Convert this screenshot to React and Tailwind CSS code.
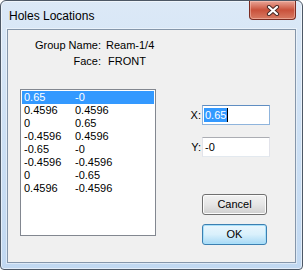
const ROWS = [
  ['0.65', '-0'],
  ['0.4596', '0.4596'],
  ['0', '0.65'],
  ['-0.4596', '0.4596'],
  ['-0.65', '-0'],
  ['-0.4596', '-0.4596'],
  ['0', '-0.65'],
  ['0.4596', '-0.4596'],
];

const font = { fontFamily: '"Liberation Sans", Arial, sans-serif' };

function CloseGlyph() {
  return (
    <svg width="14" height="11" viewBox="0 0 14 11">
      <path d="M3 2 L11 9 M11 2 L3 9" stroke="#4a2a26" strokeWidth="4.2" strokeLinecap="round" fill="none" />
      <path d="M3 2 L11 9 M11 2 L3 9" stroke="#ffffff" strokeWidth="2.2" strokeLinecap="round" fill="none" />
    </svg>
  );
}

function Button({ children, primary }) {
  return (
    <div
      className={
        'w-[65px] h-[21px] rounded-[3px] border flex items-center justify-center text-[11px] text-black ' +
        (primary
          ? 'border-[#3c7fb1] bg-gradient-to-b from-[#eaf6fd] via-[#d9f0fc] to-[#a7d9f5] shadow-[inset_0_0_0_1px_#a8e0fa]'
          : 'border-[#707070] bg-gradient-to-b from-[#f2f2f2] via-[#e6e6e6] to-[#cfcfcf] shadow-[inset_0_0_0_1px_#fcfcfc]')
      }
    >
      {children}
    </div>
  );
}

export default function App() {
  return (
    <div className="w-[303px] h-[270px] bg-white" style={font}>
      <div className="w-[303px] h-[270px] flex flex-col rounded-t-[6px] rounded-b-[4px] border border-[#4d5866] bg-gradient-to-b from-[#dce9f7] via-[#cde0f4] to-[#c1d8f1] shadow-[inset_0_0_0_1px_rgba(255,255,255,0.55)] px-[6px] pb-[6px]">
        {/* Title bar */}
        <div className="h-[28px] flex items-start justify-between shrink-0">
          <div className="pl-[2px] pt-[8px] text-[12px] leading-[14px] text-black">Holes Locations</div>
          <div className="w-[47px] h-[19px] rounded-b-[4px] border border-t-0 border-[#7a2b21] bg-gradient-to-b from-[#e8a597] via-[#c9513b] to-[#d77a63] shadow-[inset_0_0_0_1px_rgba(255,210,200,0.45)] flex items-center justify-center">
            <CloseGlyph />
          </div>
        </div>

        {/* Client area */}
        <div className="flex-1 border border-[#8596aa] bg-[#f0f0f0] shadow-[0_0_0_1px_rgba(255,255,255,0.45)] text-[11px] leading-[13px] text-black">
          <div className="pt-[9px] grid grid-cols-[93px_auto] gap-x-[5px] gap-y-[3px]">
            <div className="text-right">Group Name:</div>
            <div>Ream-1/4</div>
            <div className="text-right">Face:</div>
            <div className="pl-[2px]">FRONT</div>
          </div>

          <div className="mt-[21px] flex items-start">
            {/* List box */}
            <div className="ml-[12px] w-[136px] h-[147px] border border-[#828790] bg-white p-[1px]">
              {ROWS.map((r, i) => (
                <div
                  key={i}
                  className={
                    'h-[13px] leading-[12px] flex pl-[2px] ' + (i === 0 ? 'bg-[#3399ff] text-white' : 'text-black')
                  }
                >
                  <span className="w-[51px]">{r[0]}</span>
                  <span>{r[1]}</span>
                </div>
              ))}
            </div>

            {/* Right column */}
            <div className="ml-[34px] pt-[16px] flex flex-col">
              <div className="flex items-center h-[20px]">
                <span className="w-[12px] text-right pr-[1px]">X:</span>
                <div className="w-[68px] h-[20px] border border-[#8fb4dc] border-t-[#5f8dc2] bg-white flex items-center pl-[1px]">
                  <span className="bg-[#3399ff] text-white leading-[14px] px-[1px]">0.65</span>
                  <span className="w-[1px] h-[14px] bg-black" />
                </div>
              </div>
              <div className="mt-[12px] flex items-center h-[20px]">
                <span className="w-[12px] text-right pr-[1px]">Y:</span>
                <div className="w-[68px] h-[20px] border border-[#e2e3ea] border-t-[#abadb3] border-b-[#e3e9ef] bg-white flex items-center pl-[2px]">
                  <span>-0</span>
                </div>
              </div>
              <div className="mt-[37px] ml-[12px]">
                <Button>Cancel</Button>
              </div>
              <div className="mt-[9px] ml-[12px]">
                <Button primary>OK</Button>
              </div>
            </div>
          </div>
        </div>
      </div>
    </div>
  );
}
